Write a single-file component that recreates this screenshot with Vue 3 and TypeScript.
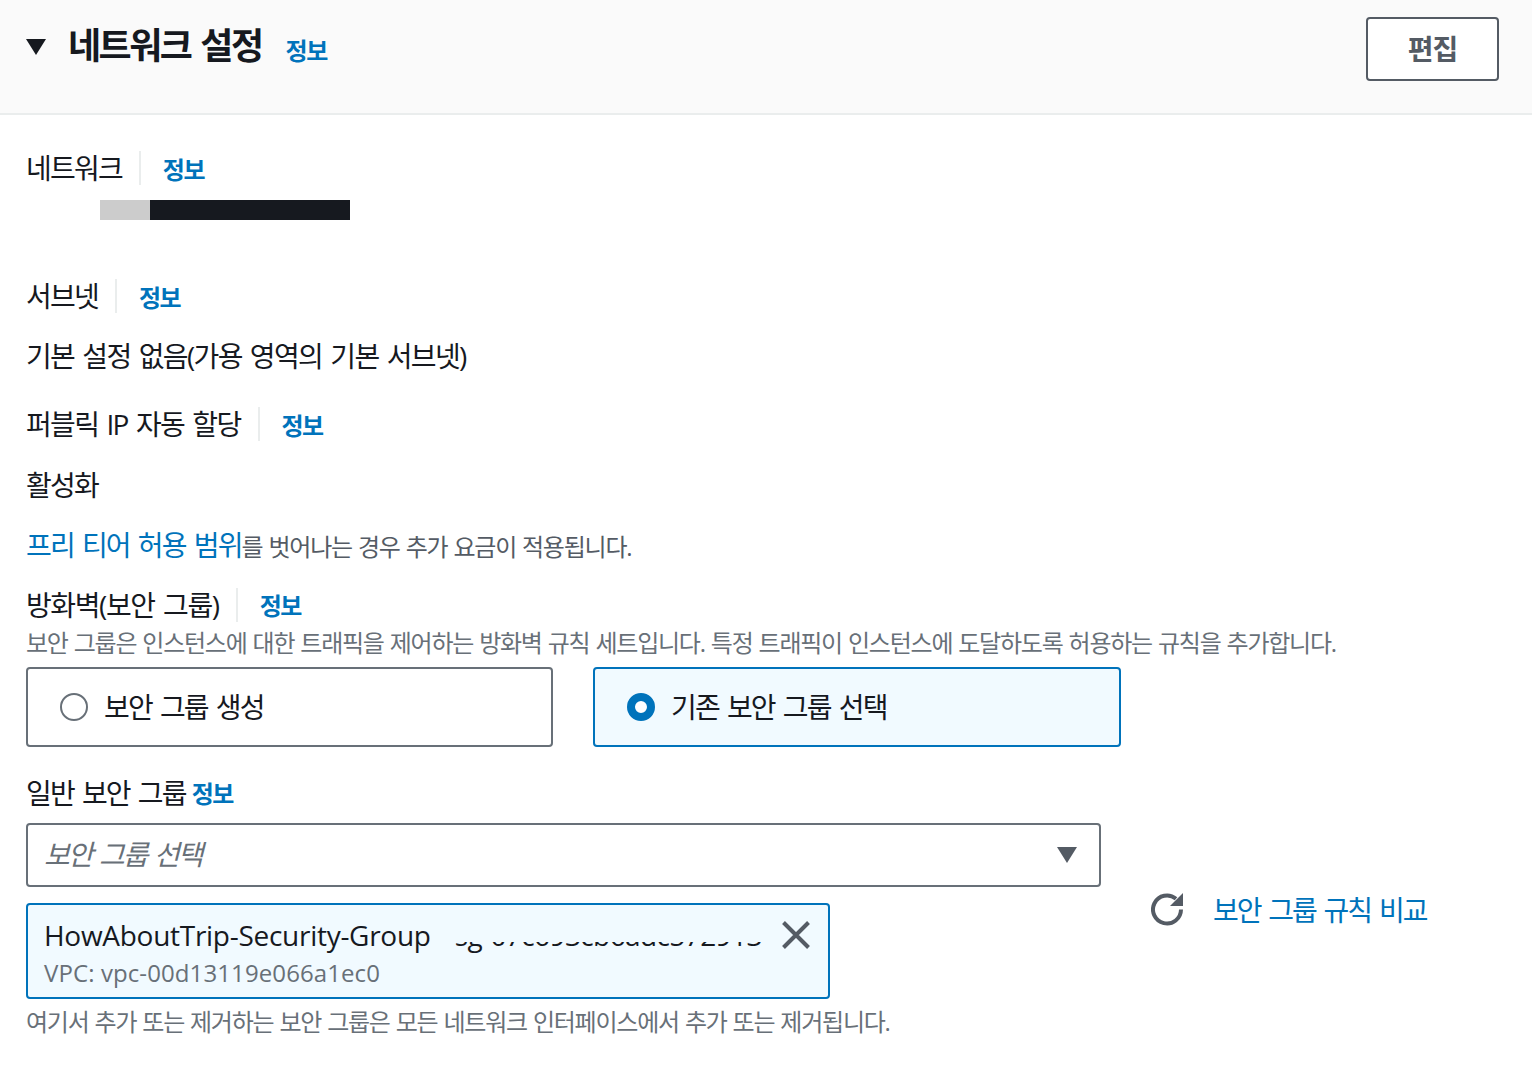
<script setup lang="ts">
type Tile = { label: string; selected: boolean }

const tiles: Tile[] = [
  { label: '보안 그룹 생성', selected: false },
  { label: '기존 보안 그룹 선택', selected: true },
]
</script>

<template>
  <div class="page">
    <header class="head">
      <svg class="caret" viewBox="0 0 20 16" width="20" height="16"><path d="M0 0h20L10 16z" fill="#16191f" /></svg>
      <h2 class="title">네트워크 설정</h2>
      <a class="info title-info">정보</a>
      <button class="edit">편집</button>
    </header>

    <section class="body">
      <div class="label-row first">
        <span class="label">네트워크</span>
        <a class="info">정보</a>
      </div>
      <div class="redact"><i class="grey"></i><i class="black"></i></div>

      <div class="label-row subnet">
        <span class="label">서브넷</span>
        <a class="info">정보</a>
      </div>
      <div class="value v1">기본 설정 없음(가용 영역의 기본 서브넷)</div>

      <div class="label-row public">
        <span class="label">퍼블릭 IP 자동 할당</span>
        <a class="info">정보</a>
      </div>
      <div class="value v2">활성화</div>

      <div class="free"><a class="link">프리 티어 허용 범위</a><span class="free-rest">를 벗어나는 경우 추가 요금이 적용됩니다.</span></div>

      <div class="label-row firewall">
        <span class="label">방화벽(보안 그룹)</span>
        <a class="info">정보</a>
      </div>
      <p class="hint">보안 그룹은 인스턴스에 대한 트래픽을 제어하는 방화벽 규칙 세트입니다. 특정 트래픽이 인스턴스에 도달하도록 허용하는 규칙을 추가합니다.</p>

      <div class="tiles">
        <div v-for="tile in tiles" :key="tile.label" class="tile" :class="{ on: tile.selected }">
          <span class="radio" :class="{ checked: tile.selected }"></span>
          <span class="tile-label">{{ tile.label }}</span>
        </div>
      </div>

      <div class="common">일반 보안 그룹 <a class="info">정보</a></div>

      <div class="group-row">
        <div class="group-main">
          <div class="select">
            <span class="placeholder">보안 그룹 선택</span>
            <svg viewBox="0 0 20 16" width="20" height="16"><path d="M0 0h20L10 16z" fill="#545b64" /></svg>
          </div>
          <div class="token">
            <div class="token-text">
              <div class="token-top">
                <span class="token-name">HowAboutTrip-Security-Group</span>
                <span class="token-id">sg-07c693cb6adc572913</span>
              </div>
              <div class="token-vpc">VPC: vpc-00d13119e066a1ec0</div>
            </div>
            <svg class="close" viewBox="0 0 28 28" width="28" height="28"><path d="M1.5 1.5l25 25M26.5 1.5l-25 25" stroke="#545b64" stroke-width="4" fill="none" /></svg>
          </div>
        </div>
        <div class="compare">
          <svg viewBox="0 0 34 34" width="34" height="34"><path d="M30 17.5a14 14 0 1 1-5-10.7" stroke="#545b64" stroke-width="4" fill="none" /><path d="M32 1v13H19z" fill="#545b64" /></svg>
          <a class="link">보안 그룹 규칙 비교</a>
        </div>
      </div>

      <p class="hint foot">여기서 추가 또는 제거하는 보안 그룹은 모든 네트워크 인터페이스에서 추가 또는 제거됩니다.</p>
    </section>
  </div>
</template>

<style>
html, body {
  margin: 0;
  background: #fff;
}
</style>

<style scoped>
.page {
  width: 1532px;
  height: 1070px;
  overflow: hidden;
  font-family: "Open Sans", "Noto Sans CJK KR", sans-serif;
  color: #16191f;
  font-size: 28px;
  letter-spacing: -1.8px;
  word-spacing: 2.5px;
}

.head {
  height: 115px;
  box-sizing: border-box;
  background: #fafafa;
  border-bottom: 2px solid #eaeded;
  display: flex;
  align-items: flex-start;
  padding: 17px 33px 0 26px;
}

.caret {
  margin-top: 22px;
}

.title {
  margin: 6px 0 0 22px;
  font-size: 36px;
  line-height: 46px;
  font-weight: 700;
  letter-spacing: -2.5px;
  word-spacing: 3px;
}

.info {
  color: #0073bb;
  font-size: 24px;
  font-weight: 700;
  letter-spacing: -1.5px;
  word-spacing: 0;
}

.title-info {
  margin: 18px 0 0 24px;
  line-height: 32px;
}

.edit {
  margin-left: auto;
  width: 133px;
  height: 64px;
  box-sizing: border-box;
  background: #fff;
  border: 2px solid #545b64;
  border-radius: 4px;
  color: #545b64;
  font: 700 28px "Open Sans", "Noto Sans CJK KR", sans-serif;
  letter-spacing: -1px;
  padding: 0 0 2px;
}

.body {
  padding: 0 26px;
}

.label-row {
  display: flex;
  align-items: center;
  height: 34px;
}

.label {
  line-height: 34px;
  padding-right: 17px;
  border-right: 2px solid #eaeded;
  margin-right: 22px;
}

.first { margin-top: 36px; }

.redact {
  display: flex;
  margin: 15px 0 0 74px;
  height: 20px;
}

.redact i { display: block; height: 20px; }
.grey { width: 50px; background: #cccccc; }
.black { width: 200px; background: #16191f; }

.subnet { margin-top: 59px; }

.value {
  line-height: 40px;
}

.v1 {
  margin-top: 23px;
  letter-spacing: -1.65px;
}

.public { margin-top: 31px; }
.public .label { letter-spacing: -1.65px; }
.v2 { margin-top: 24px; }

.free {
  margin-top: 20px;
  line-height: 40px;
}

.link { color: #0073bb; }

.compare .link { letter-spacing: -2px; }

.free-rest {
  color: #545b64;
  font-size: 24px;
  letter-spacing: -1.22px;
  word-spacing: 1px;
}

.firewall { margin-top: 21px; }

.firewall .label { letter-spacing: -1.4px; }

.firewall .info { margin-top: -2px; }

.hint {
  margin: 0;
  color: #687078;
  font-size: 24px;
  line-height: 32px;
  letter-spacing: -1.225px;
  word-spacing: 1px;
}

.firewall + .hint { margin-top: 5px; }

.tiles {
  display: flex;
  gap: 40px;
  margin-top: 8px;
}

.tile {
  flex: 0 0 527px;
  height: 80px;
  box-sizing: border-box;
  border: 2px solid #687078;
  border-radius: 4px;
  display: flex;
  align-items: center;
  padding-left: 32px;
  gap: 16px;
}

.tile-label {
  position: relative;
  top: -1px;
}

.tile.on {
  flex-basis: 528px;
  background: #f1faff;
  border-color: #0073bb;
}

.radio {
  width: 28px;
  height: 28px;
  box-sizing: border-box;
  border: 2px solid #687078;
  border-radius: 50%;
  background: #fff;
}

.radio.checked {
  border: 8px solid #0073bb;
}

.common {
  margin-top: 26px;
  line-height: 40px;
}

.common .info {
  position: relative;
  top: -1px;
  margin-left: -2px;
}

.group-row {
  display: flex;
  margin-top: 8px;
}

.group-main {
  width: 1075px;
}

.select {
  height: 64px;
  box-sizing: border-box;
  border: 2px solid #687078;
  border-radius: 4px;
  display: flex;
  align-items: center;
  justify-content: space-between;
  padding: 0 22px 0 16px;
}

.placeholder {
  color: #687078;
  font-style: italic;
  position: relative;
  top: -2px;
  letter-spacing: -2.1px;
}

.token {
  margin-top: 16px;
  width: 804px;
  height: 96px;
  box-sizing: border-box;
  background: #f1faff;
  border: 2px solid #0073bb;
  border-radius: 4px;
  display: flex;
  justify-content: space-between;
  padding: 10px 18px 0 16px;
}

.token-top {
  display: flex;
  line-height: 40px;
}

.token-name {
  margin-right: 24px;
  letter-spacing: -0.28px;
}

/* id is masked in the screenshot: only the bottoms of the glyphs show */
.token-id {
  display: block;
  white-space: nowrap;
  letter-spacing: -0.6px;
  clip-path: inset(27px 0 0 0);
}

.token-vpc {
  color: #687078;
  font-size: 24px;
  line-height: 34px;
  letter-spacing: 0.1px;
  word-spacing: 0;
  margin-top: 1px;
}

.close { margin-top: 6px; }

.compare {
  display: flex;
  align-items: center;
  gap: 28px;
  margin: 62px 0 0 50px;
  height: 48px;
}

.foot {
  margin-top: 7px;
}
</style>
